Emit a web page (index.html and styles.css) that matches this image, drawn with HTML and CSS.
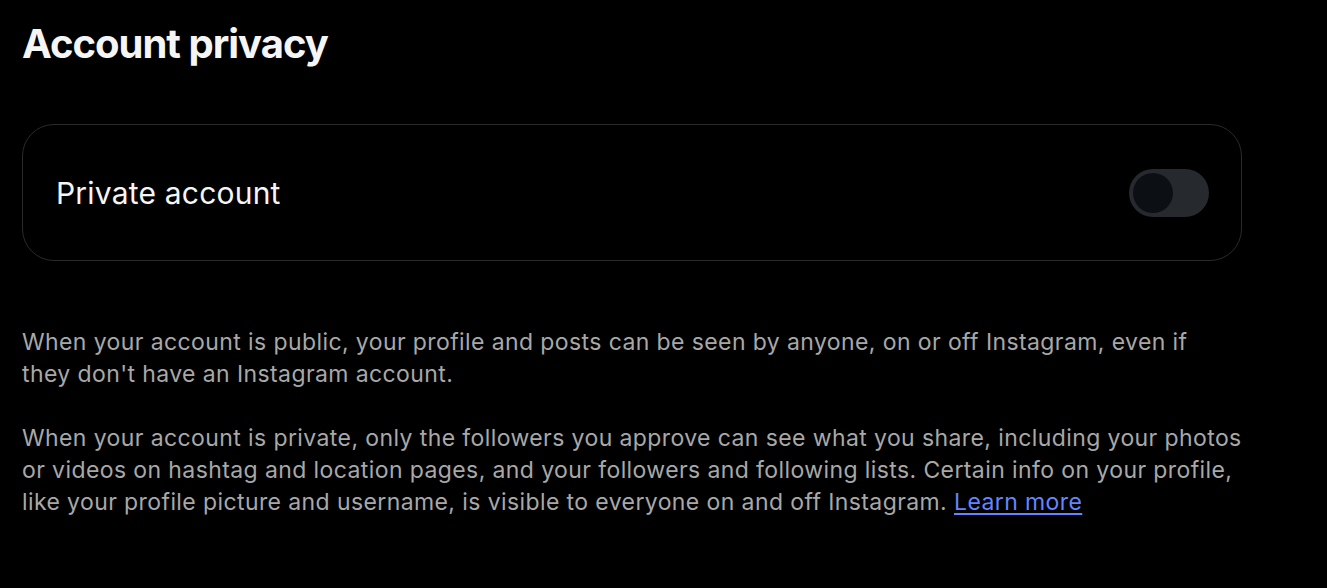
FILE: index.html
```html
<!DOCTYPE html>
<html lang="en">
<head>
<meta charset="utf-8">
<title>Account privacy</title>
<link rel="stylesheet" href="styles.css">
</head>
<body>
<main class="page">
  <h1 class="title">Account privacy</h1>
  <section class="card">
    <span class="card-label">Private account</span>
    <span class="toggle" role="switch" aria-checked="false"><span class="knob"></span></span>
  </section>
  <div class="desc">
    <p>When your account is public, your profile and posts can be seen by anyone, on or off Instagram, even if they don't have an Instagram account.</p>
    <p>When your account is private, only the followers you approve can see what you share, including your photos or videos on hashtag and location pages, and your followers and following lists. Certain info on your profile, like your profile picture and username, is visible to everyone on and off Instagram. <a href="#" class="link">Learn more</a></p>
  </div>
</main>
</body>
</html>
```

FILE: styles.css
```css
html, body {
  margin: 0;
  background: #000;
}
body {
  font-family: Inter, "Noto Sans", "Liberation Sans", sans-serif;
  color: #f5f5f5;
}
.page {
  width: 1220px;
  padding: 20px 0 0 22px;
}
.title {
  margin: 0;
  font-size: 40px;
  line-height: 48px;
  font-weight: 700;
  letter-spacing: -1px;
  color: #f5f5f5;
}
.card {
  margin-top: 56px;
  height: 135px;
  border: 1px solid #2a2a2a;
  border-radius: 32px;
  display: flex;
  align-items: center;
  justify-content: space-between;
  padding: 0 32px 0 33px;
}
.card-label {
  font-size: 30px;
  font-weight: 400;
  letter-spacing: 0.2px;
  color: #f5f5f5;
}
.toggle {
  width: 80px;
  height: 48px;
  border-radius: 24px;
  background: #262a2e;
  display: flex;
  align-items: center;
  padding: 0 4px;
  box-sizing: border-box;
}
.knob {
  width: 40px;
  height: 40px;
  border-radius: 50%;
  background: #0c1014;
}
.desc {
  margin-top: 65px;
  font-size: 23px;
  line-height: 32px;
  letter-spacing: 0.4px;
  color: #a8a8a8;
}
.desc p {
  margin: 0 0 32px;
}
.link {
  color: #6585ff;
  text-decoration: underline;
  text-underline-offset: 3px;
}
```
